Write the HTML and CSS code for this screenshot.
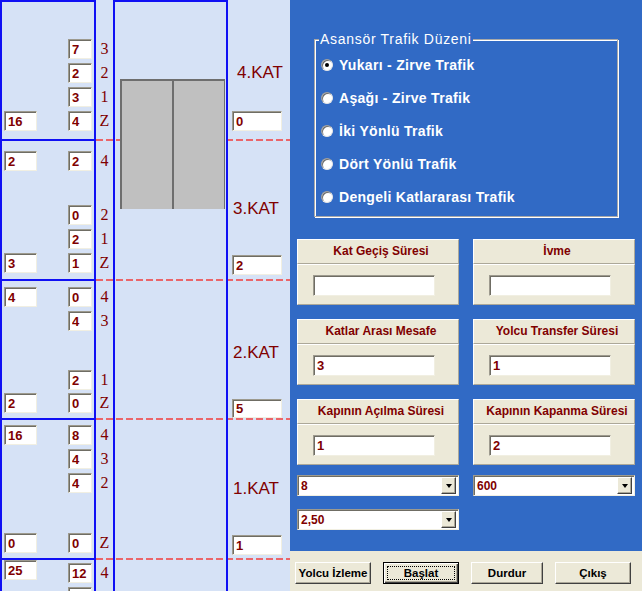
FILE: index.html
```html
<!DOCTYPE html>
<html lang="tr">
<head>
<meta charset="utf-8">
<title>Asansör Trafik Simülasyonu</title>
<link rel="stylesheet" href="styles.css">
</head>
<body>
<div class="app">
  <section class="building">
    <div class="band b1">
      <div class="floorbox">
        <div class="grp"></div>
        <div class="grp">
          <div class="row"><input class="fld small" value="7" readonly><span class="lvl">3</span></div>
          <div class="row"><input class="fld small" value="2" readonly><span class="lvl">2</span></div>
          <div class="row"><input class="fld small" value="3" readonly><span class="lvl">1</span></div>
          <div class="row"><input class="fld wide" value="16" readonly><input class="fld small" value="4" readonly><span class="lvl">Z</span></div>
        </div>
      </div>
      <div class="shaft"></div>
      <div class="side"><div class="kat">4.KAT</div><input class="fld sidef" value="0" readonly></div>
    </div>

    <div class="band b2 dash">
      <div class="floorbox">
        <div class="grp">
          <div class="row"><input class="fld wide" value="2" readonly><input class="fld small" value="2" readonly><span class="lvl">4</span></div>
        </div>
        <div class="grp">
          <div class="row"><input class="fld small" value="0" readonly><span class="lvl">2</span></div>
          <div class="row"><input class="fld small" value="2" readonly><span class="lvl">1</span></div>
          <div class="row"><input class="fld wide" value="3" readonly><input class="fld small" value="1" readonly><span class="lvl">Z</span></div>
        </div>
      </div>
      <div class="shaft"></div>
      <div class="side"><div class="kat">3.KAT</div><input class="fld sidef" value="2" readonly></div>
    </div>

    <div class="band b3 dash">
      <div class="floorbox">
        <div class="grp">
          <div class="row"><input class="fld wide" value="4" readonly><input class="fld small" value="0" readonly><span class="lvl">4</span></div>
          <div class="row"><input class="fld small" value="4" readonly><span class="lvl">3</span></div>
        </div>
        <div class="grp tight">
          <div class="row"><input class="fld small" value="2" readonly><span class="lvl">1</span></div>
          <div class="row"><input class="fld wide" value="2" readonly><input class="fld small" value="0" readonly><span class="lvl">Z</span></div>
        </div>
      </div>
      <div class="shaft"></div>
      <div class="side"><div class="kat">2.KAT</div><input class="fld sidef" value="5" readonly></div>
    </div>

    <div class="band b4 dash">
      <div class="floorbox">
        <div class="grp">
          <div class="row"><input class="fld wide" value="16" readonly><input class="fld small" value="8" readonly><span class="lvl">4</span></div>
          <div class="row"><input class="fld small" value="4" readonly><span class="lvl">3</span></div>
          <div class="row"><input class="fld small" value="4" readonly><span class="lvl">2</span></div>
        </div>
        <div class="grp">
          <div class="row"><input class="fld wide" value="0" readonly><input class="fld small" value="0" readonly><span class="lvl">Z</span></div>
        </div>
      </div>
      <div class="shaft"></div>
      <div class="side"><div class="kat">1.KAT</div><input class="fld sidef" value="1" readonly></div>
    </div>

    <div class="band b5 dash">
      <div class="floorbox">
        <div class="grp">
          <div class="row"><input class="fld wide up" value="25" readonly><input class="fld small" value="12" readonly><span class="lvl">4</span></div>
          <div class="row"><input class="fld small" value="" readonly></div>
        </div>
      </div>
      <div class="shaft"></div>
      <div class="side"></div>
    </div>

    <div class="car"><div class="door"></div><div class="door"></div></div>
  </section>

  <section class="controls">
    <div class="workspace">
      <div class="group">
        <span class="legend">Asansör Trafik Düzeni</span>
        <div class="radios">
          <label class="radio"><span class="dot on"></span>Yukarı - Zirve Trafik</label>
          <label class="radio"><span class="dot"></span>Aşağı - Zirve Trafik</label>
          <label class="radio"><span class="dot"></span>İki Yönlü Trafik</label>
          <label class="radio"><span class="dot"></span>Dört Yönlü Trafik</label>
          <label class="radio"><span class="dot"></span>Dengeli Katlararası Trafik</label>
        </div>
      </div>

      <div class="params">
        <div class="param"><div class="phead">Kat Geçiş Süresi</div><div class="pbody"><input class="fld pin" value="" readonly></div></div>
        <div class="param"><div class="phead">İvme</div><div class="pbody"><input class="fld pin" value="" readonly></div></div>
        <div class="param"><div class="phead">Katlar Arası Mesafe</div><div class="pbody"><input class="fld pin" value="3" readonly></div></div>
        <div class="param"><div class="phead">Yolcu Transfer Süresi</div><div class="pbody"><input class="fld pin" value="1" readonly></div></div>
        <div class="param"><div class="phead">Kapının Açılma Süresi</div><div class="pbody"><input class="fld pin" value="1" readonly></div></div>
        <div class="param"><div class="phead">Kapının Kapanma Süresi</div><div class="pbody"><input class="fld pin" value="2" readonly></div></div>
      </div>

      <div class="combos">
        <div class="combo"><span class="cval">8</span><span class="cbtn"></span></div>
        <div class="combo"><span class="cval">600</span><span class="cbtn"></span></div>
        <div class="combo"><span class="cval">2,50</span><span class="cbtn"></span></div>
      </div>
    </div>

    <div class="actionbar">
      <button class="btn">Yolcu İzleme</button>
      <button class="btn default">Başlat</button>
      <button class="btn narrow">Durdur</button>
      <button class="btn">Çıkış</button>
    </div>
  </section>
</div>
</body>
</html>
```

FILE: styles.css
```css
* { box-sizing: border-box; }

html, body {
  margin: 0;
  padding: 0;
}

body {
  width: 642px;
  height: 591px;
  overflow: hidden;
  font-family: "Liberation Sans", Arial, sans-serif;
  background: #316ac5;
}

.app {
  display: flex;
  width: 642px;
  height: 591px;
}

/* ---------- building (left) ---------- */

.building {
  position: relative;
  width: 290px;
  height: 591px;
  flex: none;
  background: #d6e2f6;
  overflow: hidden;
}

.band {
  display: flex;
  height: var(--h);
  flex: none;
}

.band.dash {
  background: repeating-linear-gradient(to right, rgba(240, 70, 70, 0.8) 0 7px, transparent 7px 10px) 96px 0 / 194px 2px no-repeat;
}

.b1 { --h: 139px; --pt: 0px;  --pb: 8px; --kt: 63px; --ig: 28px; --kx: 5px; }
.b2 { --h: 140px; --pt: 12px; --pb: 6px; --kt: 60px; --ig: 36px; --kx: 1px; }
.b3 { --h: 139px; --pt: 8px;  --pb: 5px; --kt: 64px; --ig: 36px; --kx: 1px; }
.b4 { --h: 140px; --pt: 7px;  --pb: 5px; --kt: 61px; --ig: 36px; --kx: 1px; }
.b5 { --h: 33px;  --pt: 5px;  --pb: 0px; --kt: 0px;  --ig: 0px;  --kx: 0px; }

.floorbox {
  width: 113px;
  flex: none;
  height: 100%;
  display: flex;
  flex-direction: column;
  justify-content: space-between;
  padding: var(--pt) 0 var(--pb);
  background:
    linear-gradient(#1010f4, #1010f4) 0 0 / 96px 2px no-repeat,
    linear-gradient(#1010f4, #1010f4) 0 0 / 2px 100% no-repeat,
    linear-gradient(#1010f4, #1010f4) 94px 0 / 2px 100% no-repeat;
}

.grp {
  display: flex;
  flex-direction: column;
  gap: 4px;
}

.grp.tight { gap: 3px; }

.row {
  display: grid;
  grid-template-columns: 4px 33px 31px 24px 4px 17px;
  height: 20px;
  align-items: center;
}

.lvl {
  grid-column: 6;
  text-align: center;
  font-family: "Liberation Serif", "Times New Roman", serif;
  font-size: 16px;
  line-height: 20px;
  color: #800000;
}

.fld {
  display: block;
  height: 20px;
  margin: 0;
  padding: 0 0 0 3px;
  border: 1px solid;
  border-color: #9d9a8e #f1efe2 #f1efe2 #9d9a8e;
  box-shadow: inset 1px 1px 0 #6f6d64;
  border-radius: 0;
  background: #fff;
  color: #800000;
  font: bold 13px "Liberation Sans", Arial, sans-serif;
  outline: none;
}

.wide { grid-column: 2; width: 33px; }
.small { grid-column: 4; width: 24px; }
.wide.up { align-self: start; margin-top: -3px; }

.shaft {
  width: 115px;
  flex: none;
  border-left: 2px solid #1010f4;
  border-right: 2px solid #1010f4;
}

.b1 .shaft { border-top: 2px solid #1010f4; }

.side {
  width: 62px;
  flex: none;
  display: flex;
  flex-direction: column;
  align-items: flex-start;
  padding: var(--kt) 0 0 4px;
}

.kat {
  margin-left: var(--kx);
  height: 20px;
  font-size: 17px;
  line-height: 20px;
  color: #800000;
}

.sidef {
  width: 50px;
  margin-top: var(--ig);
}

.car {
  position: absolute;
  left: 120px;
  top: 79px;
  width: 105px;
  height: 130px;
  display: flex;
}

.door {
  flex: 1;
  background: #c0c0c0;
  border-top: 2px solid #6e6e6e;
  border-left: 2px solid #6e6e6e;
}

.door + .door { border-right: 1px solid #6e6e6e; }

/* ---------- controls (right) ---------- */

.controls {
  width: 352px;
  flex: none;
  display: flex;
  flex-direction: column;
}

.workspace {
  height: 551px;
  background: #316ac5;
  padding-top: 39px;
}

.group {
  position: relative;
  margin-left: 24px;
  width: 304px;
  height: 178px;
  border: 1px solid #a8a8a8;
  box-shadow: inset 1px 1px 0 #fff, 1px 1px 0 #fff;
}

.legend {
  position: absolute;
  top: -10px;
  left: 4px;
  padding: 0 1px;
  background: #316ac5;
  color: #fff;
  font-size: 14px;
  line-height: 18px;
  letter-spacing: 0.7px;
  white-space: nowrap;
}

.radios {
  padding: 8px 0 0 6px;
}

.radio {
  display: flex;
  align-items: center;
  gap: 6px;
  height: 33px;
  color: #fff;
  font-weight: bold;
  font-size: 14px;
  letter-spacing: 0.3px;
  white-space: nowrap;
}

.dot {
  position: relative;
  width: 12px;
  height: 12px;
  flex: none;
  border-radius: 50%;
  background: #fff;
  border: 1px solid;
  border-color: #9a9a9a #e6e6e6 #e6e6e6 #9a9a9a;
  box-shadow: inset 1px 1px 0 #6b6b6b;
}

.dot.on::after {
  content: "";
  position: absolute;
  left: 3px;
  top: 3px;
  width: 4px;
  height: 4px;
  border-radius: 50%;
  background: #000;
}

.params,
.combos {
  display: grid;
  grid-template-columns: 162px 162px;
  column-gap: 14px;
  margin-left: 7px;
}

.params {
  margin-top: 22px;
  row-gap: 14px;
}

.param {
  height: 66px;
  display: flex;
  flex-direction: column;
}

.phead,
.pbody {
  background: #ece9d8;
  border: 1px solid;
  border-color: #fff #aca899 #aca899 #fff;
}

.phead {
  height: 25px;
  padding-left: 6px;
  text-align: center;
  font-weight: bold;
  font-size: 12px;
  line-height: 23px;
  color: #800000;
  white-space: nowrap;
}

.pbody {
  height: 41px;
  padding: 10px 0 0 15px;
}

.pin {
  width: 122px;
  height: 21px;
}

.combos {
  margin-top: 10px;
  row-gap: 13px;
}

.combo {
  height: 21px;
  display: flex;
  align-items: center;
  justify-content: space-between;
  padding: 0 2px 0 3px;
  background: #fff;
  border: 1px solid;
  border-color: #9d9a8e #f1efe2 #f1efe2 #9d9a8e;
  box-shadow: inset 1px 1px 0 #6f6d64;
  color: #800000;
  font-weight: bold;
  font-size: 12px;
}

.cbtn {
  width: 15px;
  height: 17px;
  display: flex;
  align-items: center;
  justify-content: center;
  background: #ece9d8;
  border: 1px solid;
  border-color: #fff #404040 #404040 #fff;
  box-shadow: inset -1px -1px 0 #aca899;
}

.cbtn::before {
  content: "";
  border-top: 4px solid #000;
  border-left: 3.5px solid transparent;
  border-right: 3.5px solid transparent;
}

.actionbar {
  height: 40px;
  background: #ece9d8;
  display: flex;
  gap: 12px;
  padding: 11px 0 0 5px;
}

.btn {
  width: 76px;
  height: 22px;
  margin: 0;
  padding: 0;
  background: #ece9d8;
  border: 1px solid;
  border-color: #fff #404040 #404040 #fff;
  border-radius: 0;
  box-shadow: inset -1px -1px 0 #aca899;
  color: #000;
  font: bold 11.5px "Liberation Sans", Arial, sans-serif;
  white-space: nowrap;
}

.btn.narrow { width: 72px; }

.btn.default {
  position: relative;
  border-color: #000;
  box-shadow: inset 1px 1px 0 #fff, inset -1px -1px 0 #404040, inset -2px -2px 0 #aca899;
}

.btn.default::after {
  content: "";
  position: absolute;
  inset: 3px;
  border: 1px dotted #000;
}
```
